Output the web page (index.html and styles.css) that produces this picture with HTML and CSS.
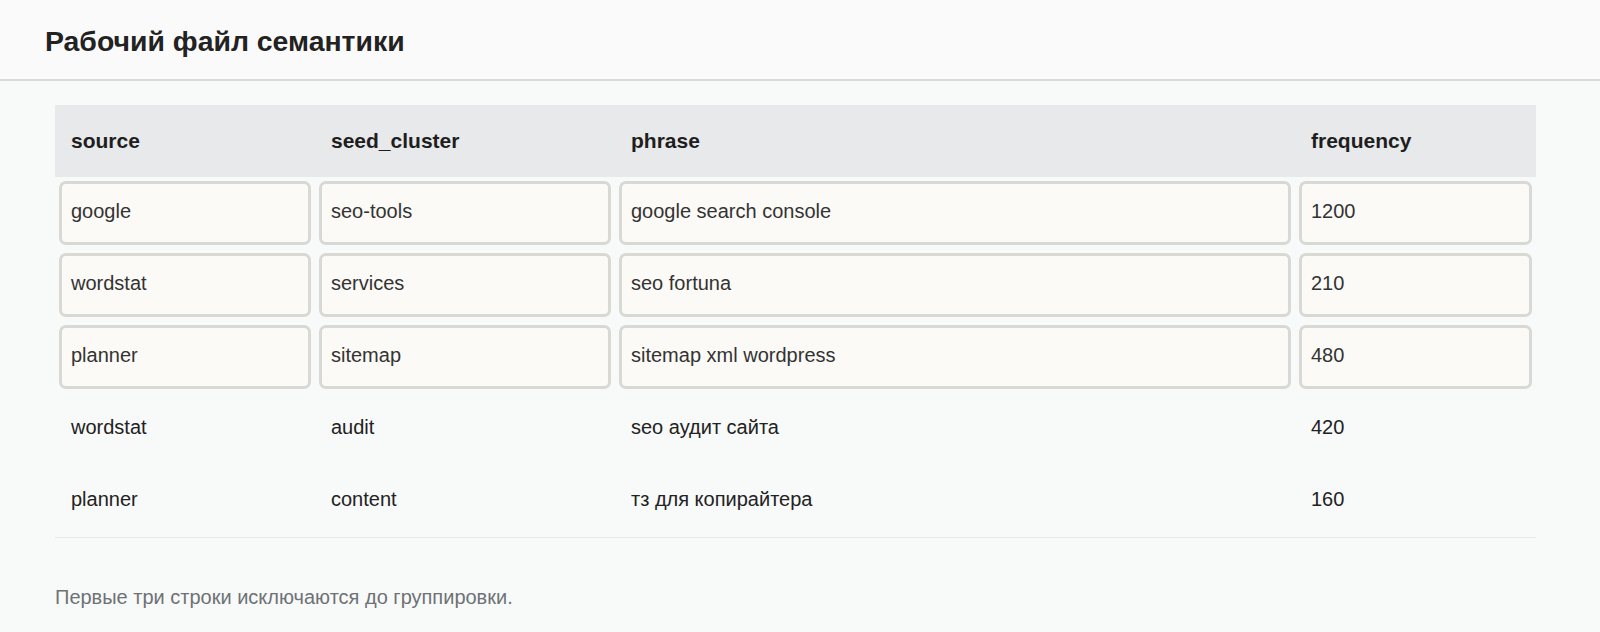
FILE: index.html
```html
<!DOCTYPE html>
<html>
<head>
  <meta charset="utf-8">
  <link rel="stylesheet" href="styles.css">
</head>
<body>
  <div class="header">
    <h1>Рабочий файл семантики</h1>
  </div>

  <div class="content">
    <table class="sheet">
      <thead>
        <tr>
          <th class="col-source"><div class="cell">source</div></th>
          <th class="col-seed"><div class="cell">seed_cluster</div></th>
          <th class="col-phrase"><div class="cell">phrase</div></th>
          <th class="col-freq"><div class="cell">frequency</div></th>
        </tr>
      </thead>
      <tbody>
        <tr class="excluded">
          <td><div class="cell">google</div></td>
          <td><div class="cell">seo-tools</div></td>
          <td><div class="cell">google search console</div></td>
          <td><div class="cell">1200</div></td>
        </tr>
        <tr class="excluded">
          <td><div class="cell">wordstat</div></td>
          <td><div class="cell">services</div></td>
          <td><div class="cell">seo fortuna</div></td>
          <td><div class="cell">210</div></td>
        </tr>
        <tr class="excluded">
          <td><div class="cell">planner</div></td>
          <td><div class="cell">sitemap</div></td>
          <td><div class="cell">sitemap xml wordpress</div></td>
          <td><div class="cell">480</div></td>
        </tr>
        <tr>
          <td><div class="cell">wordstat</div></td>
          <td><div class="cell">audit</div></td>
          <td><div class="cell">seo аудит сайта</div></td>
          <td><div class="cell">420</div></td>
        </tr>
        <tr>
          <td><div class="cell">planner</div></td>
          <td><div class="cell">content</div></td>
          <td><div class="cell">тз для копирайтера</div></td>
          <td><div class="cell">160</div></td>
        </tr>
      </tbody>
    </table>

    <p class="note">Первые три строки исключаются до группировки.</p>
  </div>
</body>
</html>
```

FILE: styles.css
```css
body {
  margin: 0;
  padding: 0;
  font-family: "Liberation Sans", Arial, sans-serif;
  background: #f8f9f9;
  color: #222222;
}

.header {
  padding: 24px 45px 21px;
  background: #fafafa;
  border-bottom: 2px solid #d9d9d9;
}

.header h1 {
  margin: 0;
  font-size: 28.4px;
  line-height: 34px;
  font-weight: 700;
  color: #222222;
}

.content {
  padding: 24px 64px 0 55px;
}

.sheet {
  width: 100%;
  border-collapse: collapse;
  border-bottom: 1px solid #e6e8ea;
}

.sheet th,
.sheet td {
  padding: 0;
  text-align: left;
}

.col-source { width: 260px; }
.col-seed { width: 300px; }
.col-phrase { width: 680px; }

.sheet thead {
  background: #e8e9eb;
}

.cell {
  display: flex;
  align-items: center;
  box-sizing: border-box;
  height: 72px;
  padding: 0 16px 4px;
  font-size: 20px;
}

.sheet th .cell {
  padding-bottom: 0;
  font-size: 21px;
  font-weight: 700;
  color: #1e1e1e;
}

.excluded .cell {
  height: 64px;
  margin: 4px;
  padding: 0 9px 4px;
  border: 3px solid #d8d8d5;
  border-radius: 7px;
  background: #fbfaf6;
  color: #333333;
}

.note {
  margin: 47px 0 0;
  font-size: 20px;
  line-height: 24px;
  color: #6e7275;
}
```
